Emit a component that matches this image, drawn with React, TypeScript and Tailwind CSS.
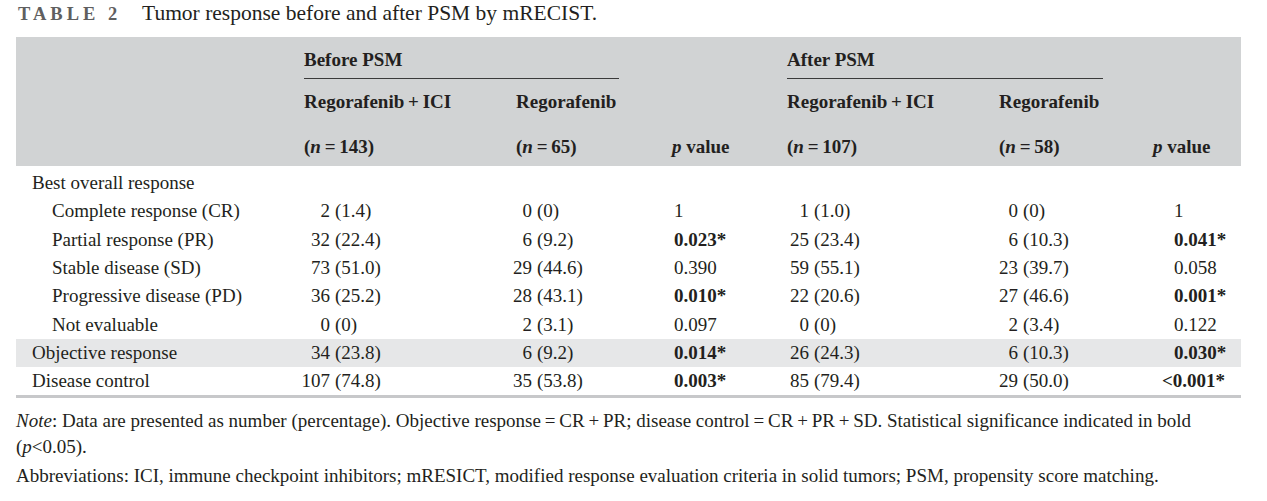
import React from "react";

type Row = {
  label: string;
  indent?: boolean;
  shade?: boolean;
  c1?: string;
  c2?: string;
  p1?: string;
  p1b?: boolean;
  c4?: string;
  c5?: string;
  p2?: string;
  p2b?: boolean;
};

const rows: Row[] = [
  { label: "Best overall response" },
  { label: "Complete response (CR)", indent: true, c1: "2 (1.4)", c2: "0 (0)", p1: "1", c4: "1 (1.0)", c5: "0 (0)", p2: "1" },
  { label: "Partial response (PR)", indent: true, c1: "32 (22.4)", c2: "6 (9.2)", p1: "0.023*", p1b: true, c4: "25 (23.4)", c5: "6 (10.3)", p2: "0.041*", p2b: true },
  { label: "Stable disease (SD)", indent: true, c1: "73 (51.0)", c2: "29 (44.6)", p1: "0.390", c4: "59 (55.1)", c5: "23 (39.7)", p2: "0.058" },
  { label: "Progressive disease (PD)", indent: true, c1: "36 (25.2)", c2: "28 (43.1)", p1: "0.010*", p1b: true, c4: "22 (20.6)", c5: "27 (46.6)", p2: "0.001*", p2b: true },
  { label: "Not evaluable", indent: true, c1: "0 (0)", c2: "2 (3.1)", p1: "0.097", c4: "0 (0)", c5: "2 (3.4)", p2: "0.122" },
  { label: "Objective response", shade: true, c1: "34 (23.8)", c2: "6 (9.2)", p1: "0.014*", p1b: true, c4: "26 (24.3)", c5: "6 (10.3)", p2: "0.030*", p2b: true },
  { label: "Disease control", c1: "107 (74.8)", c2: "35 (53.8)", p1: "0.003*", p1b: true, c4: "85 (79.4)", c5: "29 (50.0)", p2: "<0.001*", p2b: true },
];

const headGrid = "grid grid-cols-[288px_212px_156px_115px_212px_154px_88px]";
const bodyGrid = "grid grid-cols-[274px_202px_182px_95px_209px_196px_67px]";

function NHead({ n }: { n: string }) {
  return (
    <span>
      (<i>n</i>
      {"\u2009=\u2009"}
      {n})
    </span>
  );
}

function Val({ v }: { v?: string }) {
  if (!v) return <div />;
  const idx = v.indexOf(" ");
  const num = v.slice(0, idx);
  const rest = v.slice(idx + 1);
  return (
    <div className="flex whitespace-nowrap">
      <span className="w-[40px] shrink-0 text-right">{num}</span>
      <span className="pl-[5px]">{rest}</span>
    </div>
  );
}

export default function App() {
  return (
    <div
      className="w-[1267px] h-[501px] bg-white text-[#231f20] overflow-hidden"
      style={{ fontFamily: '"Liberation Serif", "DejaVu Serif", serif' }}
    >
      <div className="pl-[18px] h-[37px] flex items-baseline leading-[26px]">
        <span className="text-[18.5px] font-bold tracking-[4px] text-[#5f5f60] w-[124px] shrink-0">TABLE 2</span>
        <span className="text-[21.5px]">Tumor response before and after PSM by mRECIST.</span>
      </div>

      <div className="ml-[16px] w-[1225px]">
        <div className={`${headGrid} bg-[#d1d3d4] text-[19px] font-bold leading-[28px]`}>
          {/* row 1 */}
          <div />
          <div className="col-span-2 pt-[9px]">
            <div className="w-[315px] pb-[4px] border-b-[1.5px] border-[#3a3a3a]">Before PSM</div>
          </div>
          <div />
          <div className="col-span-2 pt-[9px]">
            <div className="w-[316px] pb-[4px] border-b-[1.5px] border-[#3a3a3a]">After PSM</div>
          </div>
          <div />
          {/* row 2 */}
          <div />
          <div className="pt-[9px]">Regorafenib{"\u2009+\u2009"}ICI</div>
          <div className="pt-[9px]">Regorafenib</div>
          <div />
          <div className="pt-[9px]">Regorafenib{"\u2009+\u2009"}ICI</div>
          <div className="pt-[9px]">Regorafenib</div>
          <div />
          {/* row 3 */}
          <div />
          <div className="pt-[17px] pb-[5px]"><NHead n="143" /></div>
          <div className="pt-[17px] pb-[5px]"><NHead n="65" /></div>
          <div className="pt-[17px] pb-[5px]"><i>p</i> value</div>
          <div className="pt-[17px] pb-[5px]"><NHead n="107" /></div>
          <div className="pt-[17px] pb-[5px]"><NHead n="58" /></div>
          <div className="pt-[17px] pb-[5px]"><i>p</i> value</div>
        </div>

        <div className="pt-[3px] text-[19px] border-b-[3px] border-[#c7c8ca]">
          {rows.map((r, i) => (
            <div
              key={i}
              className={`${bodyGrid} h-[28.3px] items-center leading-[28px] whitespace-nowrap ${r.shade ? "bg-[#e6e7e8]" : ""}`}
            >
              <div className={r.indent ? "pl-[36px]" : "pl-[16px]"}>{r.label}</div>
              <Val v={r.c1} />
              <Val v={r.c2} />
              <div className={r.p1b ? "font-bold" : ""}>{r.p1}</div>
              <Val v={r.c4} />
              <Val v={r.c5} />
              <div className={r.p2b ? "font-bold" : ""}>
                {r.p2 && r.p2.startsWith("<") ? <span className="-ml-[12px]">{r.p2}</span> : r.p2}
              </div>
            </div>
          ))}
        </div>

        <div className="pt-[10px] text-[19px] leading-[26px]">
          <p>
            <i>Note</i>: Data are presented as number (percentage). Objective response{"\u2009=\u2009"}CR{"\u2009+\u2009"}PR; disease control{"\u2009=\u2009"}CR{"\u2009+\u2009"}PR{"\u2009+\u2009"}SD. Statistical significance indicated in bold
            <br />
            (<i>p</i>&lt;0.05).
          </p>
          <p className="mt-[3px]">
            Abbreviations: ICI, immune checkpoint inhibitors; mRESICT, modified response evaluation criteria in solid tumors; PSM, propensity score matching.
          </p>
        </div>
      </div>
    </div>
  );
}
